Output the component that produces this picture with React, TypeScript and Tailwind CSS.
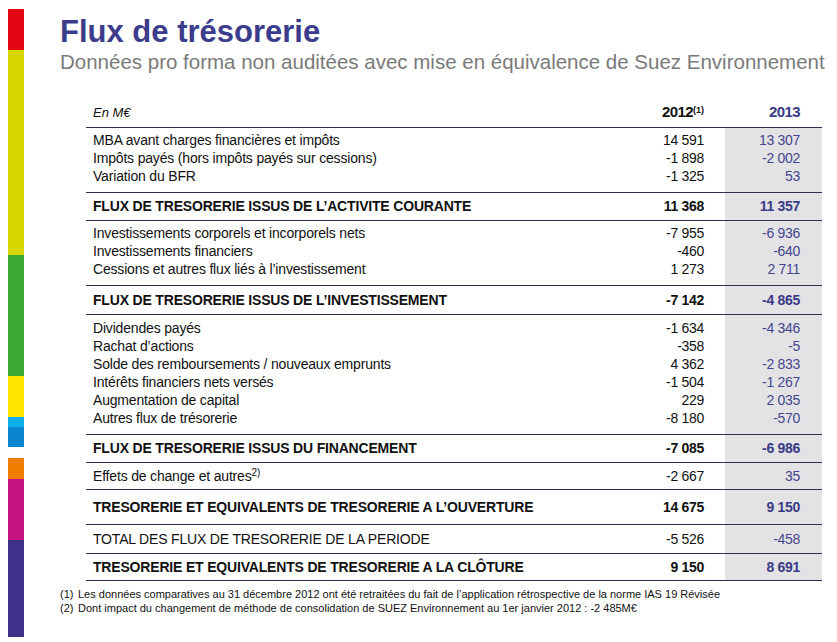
import React from "react";

type Row = [string, string, string];

const g1: Row[] = [
  ["MBA avant charges financières et impôts", "14 591", "13 307"],
  ["Impôts payés (hors impôts payés sur cessions)", "-1 898", "-2 002"],
  ["Variation du BFR", "-1 325", "53"],
];
const g2: Row[] = [
  ["Investissements corporels et incorporels nets", "-7 955", "-6 936"],
  ["Investissements financiers", "-460", "-640"],
  ["Cessions et autres flux liés à l’investissement", "1 273", "2 711"],
];
const g3: Row[] = [
  ["Dividendes payés", "-1 634", "-4 346"],
  ["Rachat d’actions", "-358", "-5"],
  ["Solde des remboursements / nouveaux emprunts", "4 362", "-2 833"],
  ["Intérêts financiers nets versés", "-1 504", "-1 267"],
  ["Augmentation de capital", "229", "2 035"],
  ["Autres flux de trésorerie", "-8 180", "-570"],
];

function Line() {
  return <div className="h-px bg-[#2f2f4d]" />;
}

function Group({ rows, pt = "pt-[3px]" }: { rows: Row[]; pt?: string }) {
  return (
    <div className="flex">
      <div className={`flex-1 pl-[7px] ${pt} pb-[7px]`}>
        {rows.map((r, i) => (
          <div key={i} className="h-[18px] leading-[18px] text-[14px] tracking-[-0.18px] text-[#111]">{r[0]}</div>
        ))}
      </div>
      <div className={`w-[110px] pr-[21px] ${pt} pb-[7px] text-right`}>
        {rows.map((r, i) => (
          <div key={i} className="h-[18px] leading-[18px] text-[14px] tracking-[-0.3px] text-[#111]">{r[1]}</div>
        ))}
      </div>
      <div className={`w-[97px] pr-[22px] ${pt} pb-[7px] text-right bg-[#e3e3e5]`}>
        {rows.map((r, i) => (
          <div key={i} className="h-[18px] leading-[18px] text-[14px] tracking-[-0.3px] text-[#45458f]">{r[2]}</div>
        ))}
      </div>
    </div>
  );
}

function Single({ label, a, b, bold, h }: { label: React.ReactNode; a: string; b: string; bold?: boolean; h: string }) {
  const w = bold ? "font-bold" : "";
  return (
    <div className={`flex ${h}`}>
      <div className={`flex-1 pl-[7px] flex items-center text-[14px] tracking-[-0.18px] text-[#111] ${w}`}>{label}</div>
      <div className={`w-[110px] pr-[21px] flex items-center justify-end text-[14px] tracking-[-0.3px] text-[#111] ${w}`}>{a}</div>
      <div className={`w-[97px] pr-[22px] flex items-center justify-end text-[14px] tracking-[-0.3px] bg-[#e3e3e5] ${bold ? "text-[#3a3a86]" : "text-[#45458f]"} ${w}`}>{b}</div>
    </div>
  );
}

export default function App() {
  const bars = [
    ["h-[41px]", "bg-[#e30613]"],
    ["h-[205px]", "bg-[#d6d600]"],
    ["h-[121px]", "bg-[#3aaa35]"],
    ["h-[41px]", "bg-[#ffe500]"],
    ["h-[10px]", "bg-[#10aee8]"],
    ["h-[20px]", "bg-[#0a86d1]"],
    ["h-[11px]", "bg-white"],
    ["h-[21px]", "bg-[#f07d00]"],
    ["h-[61px]", "bg-[#c4147f]"],
    ["h-[97px]", "bg-[#3e3189]"],
  ];
  return (
    <div className="w-[837px] h-[642px] bg-white flex overflow-hidden" style={{ fontFamily: '"Liberation Sans", Arial, sans-serif' }}>
      <div className="ml-[8px] mt-[9px] w-[16px] flex flex-col">
        {bars.map((b, i) => (
          <div key={i} className={`${b[0]} ${b[1]} shrink-0`} />
        ))}
      </div>
      <div className="ml-[36px] flex-1 flex flex-col">
        <div className="mt-[14px] text-[31px] leading-[36px] font-bold text-[#3c3c8c]">Flux de trésorerie</div>
        <div className="text-[20.5px] leading-[24px] text-[#7a7a7a] whitespace-nowrap">Données pro forma non auditées avec mise en équivalence de Suez Environnement</div>
        <div className="ml-[26px] mt-[24px] w-[736px]">
          <div className="flex h-[29px] items-center">
            <div className="flex-1 pl-[7px] text-[13px] italic text-[#111]">En M€</div>
            <div className="w-[110px] pr-[21px] text-right text-[15px] tracking-[-0.6px] font-bold text-[#111]">
              2012<sup className="text-[9px] font-bold tracking-normal">(1)</sup>
            </div>
            <div className="w-[97px] pr-[22px] text-right text-[15px] tracking-[-0.6px] font-bold text-[#3a3a86]">2013</div>
          </div>
          <Line />
          <Group rows={g1} />
          <Line />
          <Single label="FLUX DE TRESORERIE ISSUS DE L’ACTIVITE COURANTE" a="11 368" b="11 357" bold h="h-[27px]" />
          <Line />
          <Group rows={g2} />
          <Line />
          <Single label="FLUX DE TRESORERIE ISSUS DE L’INVESTISSEMENT" a="-7 142" b="-4 865" bold h="h-[28px]" />
          <Line />
          <Group rows={g3} pt="pt-[4px]" />
          <Line />
          <Single label="FLUX DE TRESORERIE ISSUS DU FINANCEMENT" a="-7 085" b="-6 986" bold h="h-[27px]" />
          <Line />
          <Single
            label={<span>Effets de change et autres<sup className="text-[10px]">2)</sup></span>}
            a="-2 667"
            b="35"
            h="h-[26px]"
          />
          <Line />
          <Single label="TRESORERIE ET EQUIVALENTS DE TRESORERIE A L’OUVERTURE" a="14 675" b="9 150" bold h="h-[34px]" />
          <Line />
          <Single label="TOTAL DES FLUX DE TRESORERIE DE LA PERIODE" a="-5 526" b="-458" h="h-[28px]" />
          <Line />
          <Single label="TRESORERIE ET EQUIVALENTS DE TRESORERIE A LA CLÔTURE" a="9 150" b="8 691" bold h="h-[26px]" />
          <Line />
        </div>
        <div className="mt-[6px] text-[11px] leading-[14px] text-[#111]">
          <div className="flex"><span className="w-[18px]">(1)</span><span>Les données comparatives au 31 décembre 2012 ont été retraitées du fait de l’application rétrospective de la norme IAS 19 Révisée</span></div>
          <div className="flex"><span className="w-[18px]">(2)</span><span>Dont impact du changement de méthode de consolidation de SUEZ Environnement au 1er janvier 2012 : -2 485M€</span></div>
        </div>
      </div>
    </div>
  );
}
